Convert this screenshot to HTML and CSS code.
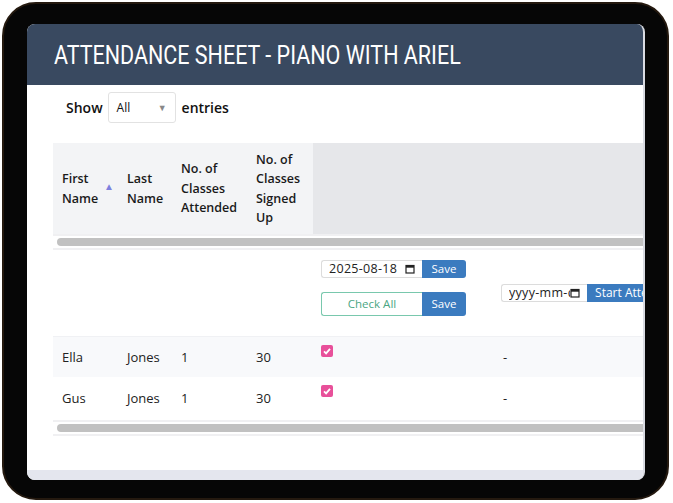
FILE: index.html
```html
<!DOCTYPE html>
<html lang="en">
<head>
  <meta charset="UTF-8">
  <title>Attendance Sheet</title>
  <link rel="stylesheet" href="styles.css">
</head>
<body>

  <!-- Tablet frame -->
  <div class="tablet">
    <div class="screen">

      <div class="top-bar">
        <h1><span>ATTENDANCE SHEET - PIANO WITH ARIEL</span></h1>
      </div>

      <div class="length">
        <span>Show</span>
        <div class="select">All <span class="caret">&#9660;</span></div>
        <span>entries</span>
      </div>

      <div class="table-wrap">
        <table class="sheet">
          <thead>
            <tr>
              <th class="c1"><div class="sort">First<br>Name <span class="arrow">&#9650;</span></div></th>
              <th class="c2">Last<br>Name</th>
              <th class="c3">No. of<br>Classes<br>Attended</th>
              <th class="c4">No. of<br>Classes<br>Signed<br>Up</th>
              <th class="c5 dark"></th>
              <th class="c6 dark"></th>
            </tr>
          </thead>
        </table>

        <div class="scroll"><div class="thumb"></div></div>

        <table class="sheet">
          <tbody>
            <tr class="tools">
              <td class="c1"></td>
              <td class="c2"></td>
              <td class="c3"></td>
              <td class="c4"></td>
              <td class="c5">
                <div class="group">
                  <div class="date">2025-08-18 <svg class="cal" viewBox="0 0 10 10"><rect x="1" y="1.5" width="8" height="7.5" fill="none" stroke="#222" stroke-width="1.2"/><rect x="1" y="1.5" width="8" height="2.2" fill="#222"/></svg></div>
                  <div class="btn small">Save</div>
                </div>
                <div class="group">
                  <div class="check-all">Check All</div>
                  <div class="btn">Save</div>
                </div>
              </td>
              <td class="c6">
                <div class="group">
                  <div class="date empty"><span class="ph">yyyy-mm-dd</span> <svg class="cal" viewBox="0 0 10 10"><rect x="1" y="1.5" width="8" height="7.5" fill="none" stroke="#222" stroke-width="1.2"/><rect x="1" y="1.5" width="8" height="2.2" fill="#222"/></svg></div>
                  <div class="btn small wide">Start Attendance</div>
                </div>
              </td>
            </tr>
            <tr class="odd">
              <td class="c1">Ella</td>
              <td class="c2">Jones</td>
              <td class="c3">1</td>
              <td class="c4">30</td>
              <td class="c5 top"><span class="tick"><svg viewBox="0 0 12 12"><path d="M3 6.3 L5.1 8.4 L9 3.8" fill="none" stroke="#fff" stroke-width="1.8"/></svg></span></td>
              <td class="c6 dash">-</td>
            </tr>
            <tr>
              <td class="c1">Gus</td>
              <td class="c2">Jones</td>
              <td class="c3">1</td>
              <td class="c4">30</td>
              <td class="c5 top"><span class="tick"><svg viewBox="0 0 12 12"><path d="M3 6.3 L5.1 8.4 L9 3.8" fill="none" stroke="#fff" stroke-width="1.8"/></svg></span></td>
              <td class="c6 dash">-</td>
            </tr>
          </tbody>
        </table>

        <div class="scroll bottom"><div class="thumb"></div></div>
      </div>

      <div class="spacer"></div>
      <div class="foot"></div>
    </div>
  </div>

</body>
</html>
```

FILE: styles.css
```css
* { margin: 0; padding: 0; box-sizing: border-box; }

body {
  background: #fff;
  font-family: 'Open Sans', 'Noto Sans', sans-serif;
  color: #222;
  padding: 2px 0 0 2px;
}

.tablet {
  width: 667px;
  height: 498px;
  background: #060606;
  border: 2px solid #24190f;
  border-radius: 34px;
  padding: 20px 22px 18px 23px;
}

.screen {
  width: 618px;
  height: 456px;
  background: #fff;
  border-radius: 8px;
  border-right: 2px solid #d9dbe2;
  overflow: hidden;
  display: flex;
  flex-direction: column;
}

.top-bar {
  height: 61px;
  background: #394960;
  padding-left: 27px;
  display: flex;
  align-items: center;
  flex-shrink: 0;
}

.top-bar h1 {
  font-family: 'Roboto', 'Liberation Sans', sans-serif;
  font-weight: 400;
  font-size: 25px;
  color: #fff;
  white-space: nowrap;
  padding-top: 2px;
}

.top-bar h1 span {
  display: inline-block;
  transform: scaleX(0.86);
  transform-origin: left center;
}

.length {
  margin-top: 7px;
  height: 31px;
  padding-left: 39px;
  display: flex;
  align-items: center;
  gap: 5px;
  font-size: 14px;
  font-weight: 600;
  color: #111;
  flex-shrink: 0;
}

.select {
  width: 68px;
  height: 31px;
  border: 1px solid #e2e2e2;
  border-radius: 3px;
  font-size: 12px;
  font-weight: 400;
  padding: 0 8px;
  display: flex;
  align-items: center;
  justify-content: space-between;
  margin-right: 1px;
}

.caret { font-size: 9px; color: #888; }

.table-wrap {
  margin: 20px 0 0 26px;
  width: 640px;
  flex-shrink: 0;
}

.sheet {
  border-collapse: collapse;
  table-layout: fixed;
  width: 640px;
}

.c1 { width: 65px; }
.c2 { width: 54px; }
.c3 { width: 75px; }
.c4 { width: 66px; }
.c5 { width: 180px; }
.c6 { width: 200px; }

th {
  height: 91px;
  background: #f3f4f6;
  font-size: 12.5px;
  font-weight: 600;
  line-height: 19.5px;
  text-align: left;
  padding: 0 4px 0 9px;
  color: #1a1a1a;
  vertical-align: middle;
}

th.dark { background: #e6e7ea; }

.sort {
  display: flex;
  align-items: center;
  justify-content: space-between;
}

.arrow { font-size: 10px; color: #7d80de; margin-top: -4px; }

td {
  font-size: 13px;
  padding: 0 4px 0 9px;
  height: 41px;
  vertical-align: middle;
  white-space: nowrap;
  overflow: hidden;
}

tr.odd td { background: #f8f9fb; }

td.top { vertical-align: top; padding: 8px 0 0 8px; }
td.dash { padding-left: 10px; }

.tools td {
  height: 86px;
  padding-left: 8px;
  border-bottom: 1px solid #f0f1f4;
}

.scroll {
  height: 16px;
  border-top: 2px solid #f0f0f2;
  border-bottom: 2px solid #f0f0f2;
  padding: 2px 0 0 4px;
}

.scroll.bottom { margin-top: 2px; }

.thumb {
  height: 8px;
  background: #c1c1c1;
  border-radius: 4px;
}

.group {
  display: flex;
  margin-bottom: 14px;
}

.date {
  width: 101px;
  height: 18px;
  border: 1px solid #dcdcdc;
  border-right: none;
  border-radius: 3px 0 0 3px;
  font-size: 12.5px;
  padding: 0 7px;
  display: flex;
  align-items: center;
  justify-content: space-between;
  letter-spacing: 0.3px;
}

.date.empty { width: 95px; overflow: hidden; }

.ph { width: 70px; overflow: hidden; white-space: nowrap; }

.cal { width: 10px; height: 10px; flex-shrink: 0; }

.btn {
  width: 44px;
  height: 24px;
  background: #3b7bbf;
  color: #fff;
  font-size: 11.5px;
  border-radius: 0 3px 3px 0;
  display: flex;
  align-items: center;
  justify-content: center;
}

.btn.small { height: 18px; }

.btn.wide {
  width: 110px;
  justify-content: flex-start;
  padding-left: 8px;
  border-radius: 0;
  font-size: 12px;
  white-space: nowrap;
}

.check-all {
  width: 101px;
  height: 24px;
  border: 1px solid #79c8ad;
  border-right: none;
  border-radius: 3px 0 0 3px;
  color: #4ba683;
  font-size: 11.5px;
  display: flex;
  align-items: center;
  justify-content: center;
}

.tools .c6 { vertical-align: middle; padding-top: 0; }
.tools .c6 .group { margin: 0; }
.tools .c5 { padding-top: 4px; }

.tick {
  display: block;
  width: 12px;
  height: 12px;
  background: #e8509a;
  border-radius: 2px;
}

.tick svg { width: 12px; height: 12px; display: block; }

.spacer { flex: 1; }

.foot {
  height: 10px;
  background: #e4e6ee;
  flex-shrink: 0;
}
```
